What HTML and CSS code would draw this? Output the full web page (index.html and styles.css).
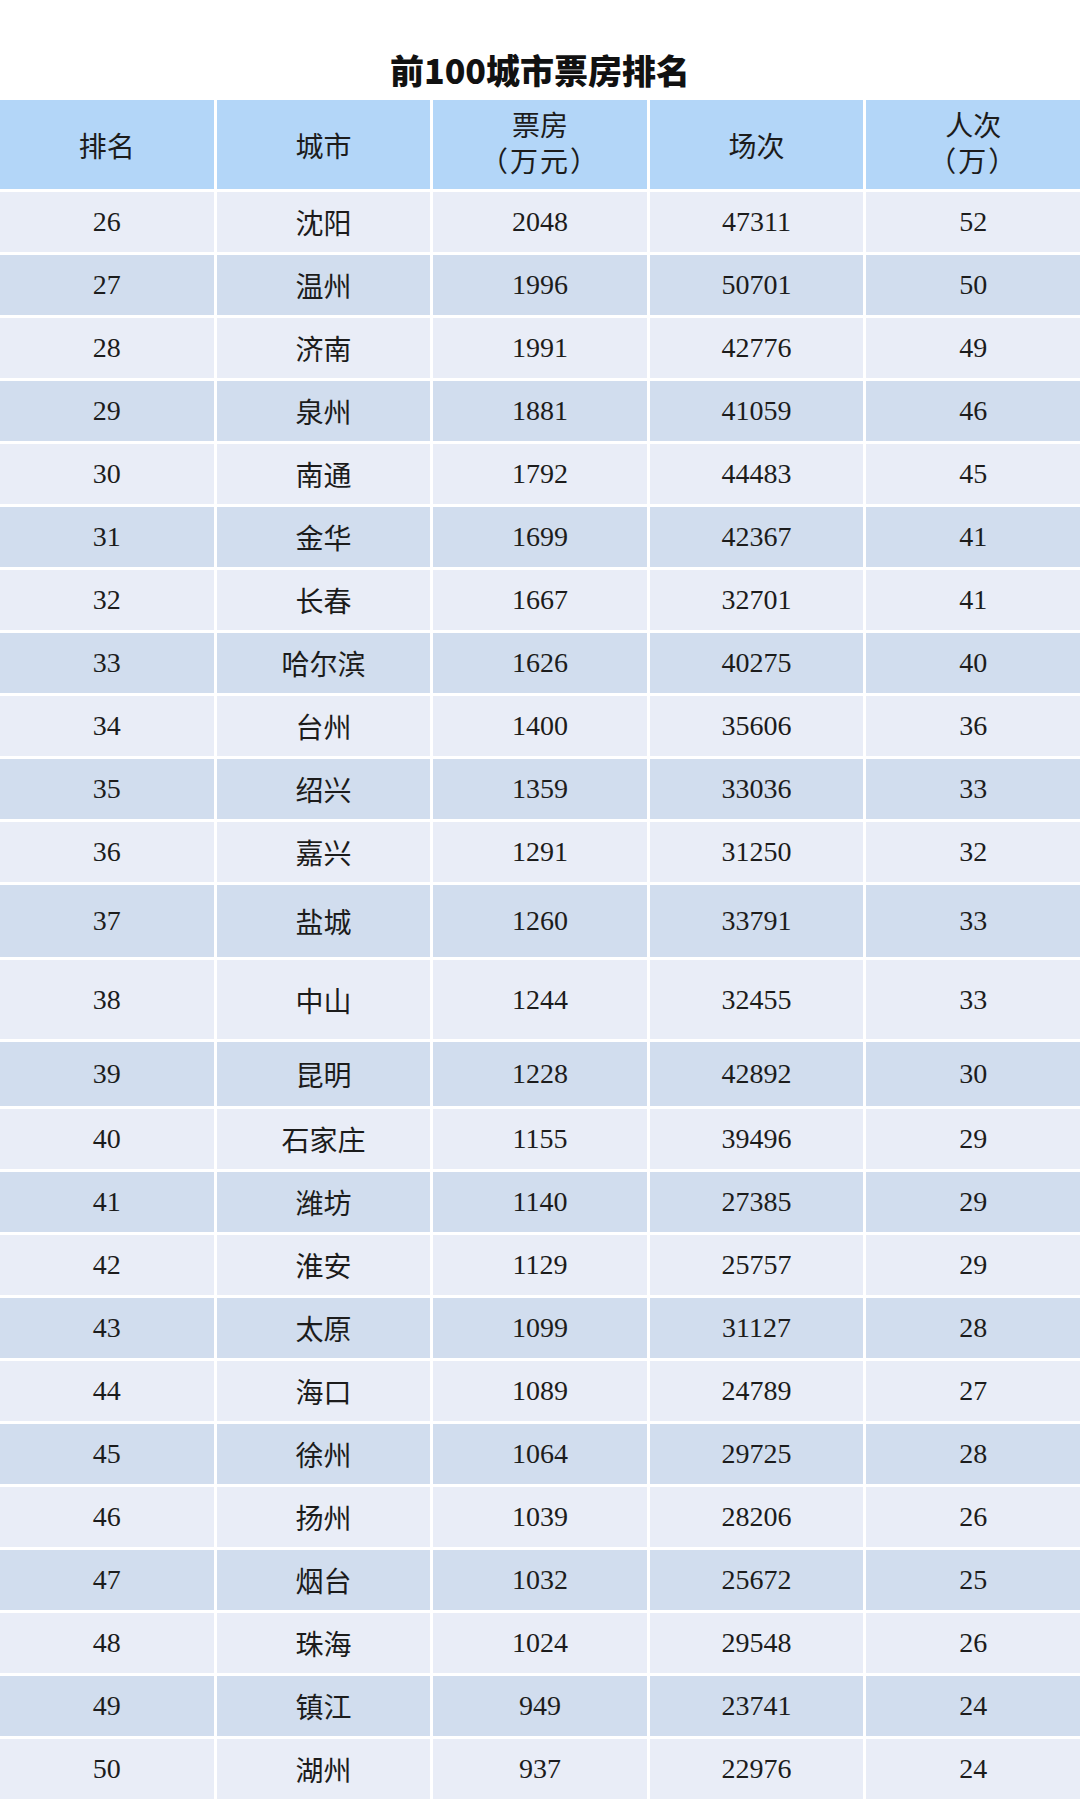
FILE: index.html
```html
<!DOCTYPE html>
<html lang="zh-CN">
<head>
<meta charset="utf-8">
<title>前100城市票房排名</title>
<link rel="stylesheet" href="styles.css">
</head>
<body>
<div class="page">
  <h1 class="title">前100城市票房排名</h1>
  <div class="table">
    <div class="row head">
      <div class="cell">排名</div>
      <div class="cell">城市</div>
      <div class="cell two"><span>票房</span><span class="paren">（万元）</span></div>
      <div class="cell">场次</div>
      <div class="cell two"><span>人次</span><span class="paren">（万）</span></div>
    </div>
    <div class="row odd"><div class="cell">26</div><div class="cell">沈阳</div><div class="cell">2048</div><div class="cell">47311</div><div class="cell">52</div></div>
    <div class="row even"><div class="cell">27</div><div class="cell">温州</div><div class="cell">1996</div><div class="cell">50701</div><div class="cell">50</div></div>
    <div class="row odd"><div class="cell">28</div><div class="cell">济南</div><div class="cell">1991</div><div class="cell">42776</div><div class="cell">49</div></div>
    <div class="row even"><div class="cell">29</div><div class="cell">泉州</div><div class="cell">1881</div><div class="cell">41059</div><div class="cell">46</div></div>
    <div class="row odd"><div class="cell">30</div><div class="cell">南通</div><div class="cell">1792</div><div class="cell">44483</div><div class="cell">45</div></div>
    <div class="row even"><div class="cell">31</div><div class="cell">金华</div><div class="cell">1699</div><div class="cell">42367</div><div class="cell">41</div></div>
    <div class="row odd"><div class="cell">32</div><div class="cell">长春</div><div class="cell">1667</div><div class="cell">32701</div><div class="cell">41</div></div>
    <div class="row even"><div class="cell">33</div><div class="cell">哈尔滨</div><div class="cell">1626</div><div class="cell">40275</div><div class="cell">40</div></div>
    <div class="row odd"><div class="cell">34</div><div class="cell">台州</div><div class="cell">1400</div><div class="cell">35606</div><div class="cell">36</div></div>
    <div class="row even"><div class="cell">35</div><div class="cell">绍兴</div><div class="cell">1359</div><div class="cell">33036</div><div class="cell">33</div></div>
    <div class="row odd"><div class="cell">36</div><div class="cell">嘉兴</div><div class="cell">1291</div><div class="cell">31250</div><div class="cell">32</div></div>
    <div class="row even r37"><div class="cell">37</div><div class="cell">盐城</div><div class="cell">1260</div><div class="cell">33791</div><div class="cell">33</div></div>
    <div class="row odd r38"><div class="cell">38</div><div class="cell">中山</div><div class="cell">1244</div><div class="cell">32455</div><div class="cell">33</div></div>
    <div class="row even r39"><div class="cell">39</div><div class="cell">昆明</div><div class="cell">1228</div><div class="cell">42892</div><div class="cell">30</div></div>
    <div class="row odd"><div class="cell">40</div><div class="cell">石家庄</div><div class="cell">1155</div><div class="cell">39496</div><div class="cell">29</div></div>
    <div class="row even"><div class="cell">41</div><div class="cell">潍坊</div><div class="cell">1140</div><div class="cell">27385</div><div class="cell">29</div></div>
    <div class="row odd"><div class="cell">42</div><div class="cell">淮安</div><div class="cell">1129</div><div class="cell">25757</div><div class="cell">29</div></div>
    <div class="row even"><div class="cell">43</div><div class="cell">太原</div><div class="cell">1099</div><div class="cell">31127</div><div class="cell">28</div></div>
    <div class="row odd"><div class="cell">44</div><div class="cell">海口</div><div class="cell">1089</div><div class="cell">24789</div><div class="cell">27</div></div>
    <div class="row even"><div class="cell">45</div><div class="cell">徐州</div><div class="cell">1064</div><div class="cell">29725</div><div class="cell">28</div></div>
    <div class="row odd"><div class="cell">46</div><div class="cell">扬州</div><div class="cell">1039</div><div class="cell">28206</div><div class="cell">26</div></div>
    <div class="row even"><div class="cell">47</div><div class="cell">烟台</div><div class="cell">1032</div><div class="cell">25672</div><div class="cell">25</div></div>
    <div class="row odd"><div class="cell">48</div><div class="cell">珠海</div><div class="cell">1024</div><div class="cell">29548</div><div class="cell">26</div></div>
    <div class="row even"><div class="cell">49</div><div class="cell">镇江</div><div class="cell">949</div><div class="cell">23741</div><div class="cell">24</div></div>
    <div class="row odd"><div class="cell">50</div><div class="cell">湖州</div><div class="cell">937</div><div class="cell">22976</div><div class="cell">24</div></div>
  </div>
</div>
</body>
</html>
```

FILE: styles.css
```css
html, body {
  margin: 0;
  padding: 0;
  background: #ffffff;
}

.page {
  width: 1080px;
  height: 1800px;
  overflow: hidden;
  background: #ffffff;
}

.title {
  margin: 0;
  padding-top: 48px;
  height: 44px;
  margin-bottom: 8px;
  line-height: 44px;
  text-align: center;
  font-family: "Noto Sans CJK SC", "Noto Sans", sans-serif;
  font-weight: 900;
  font-size: 34px;
  color: #111111;
}

.table {
  display: flex;
  flex-direction: column;
  gap: 3px;
  font-family: "Liberation Serif", "Noto Sans CJK SC", serif;
  font-size: 28px;
  color: #1c1c1c;
}

.row {
  display: grid;
  grid-template-columns: repeat(5, 1fr);
  column-gap: 3px;
  height: 60px;
}

.cell {
  display: flex;
  align-items: center;
  justify-content: center;
  text-align: center;
}

.two {
  flex-direction: column;
  line-height: 36px;
}

.paren {
  letter-spacing: 2px;
}

.head {
  height: 89px;
}

.head .cell {
  background: #b3d6f8;
}

.odd .cell {
  background: #e9edf7;
}

.even .cell {
  background: #d1ddee;
}

.r37 { height: 72px; }
.r38 { height: 79px; }
.r39 { height: 64px; }
```
